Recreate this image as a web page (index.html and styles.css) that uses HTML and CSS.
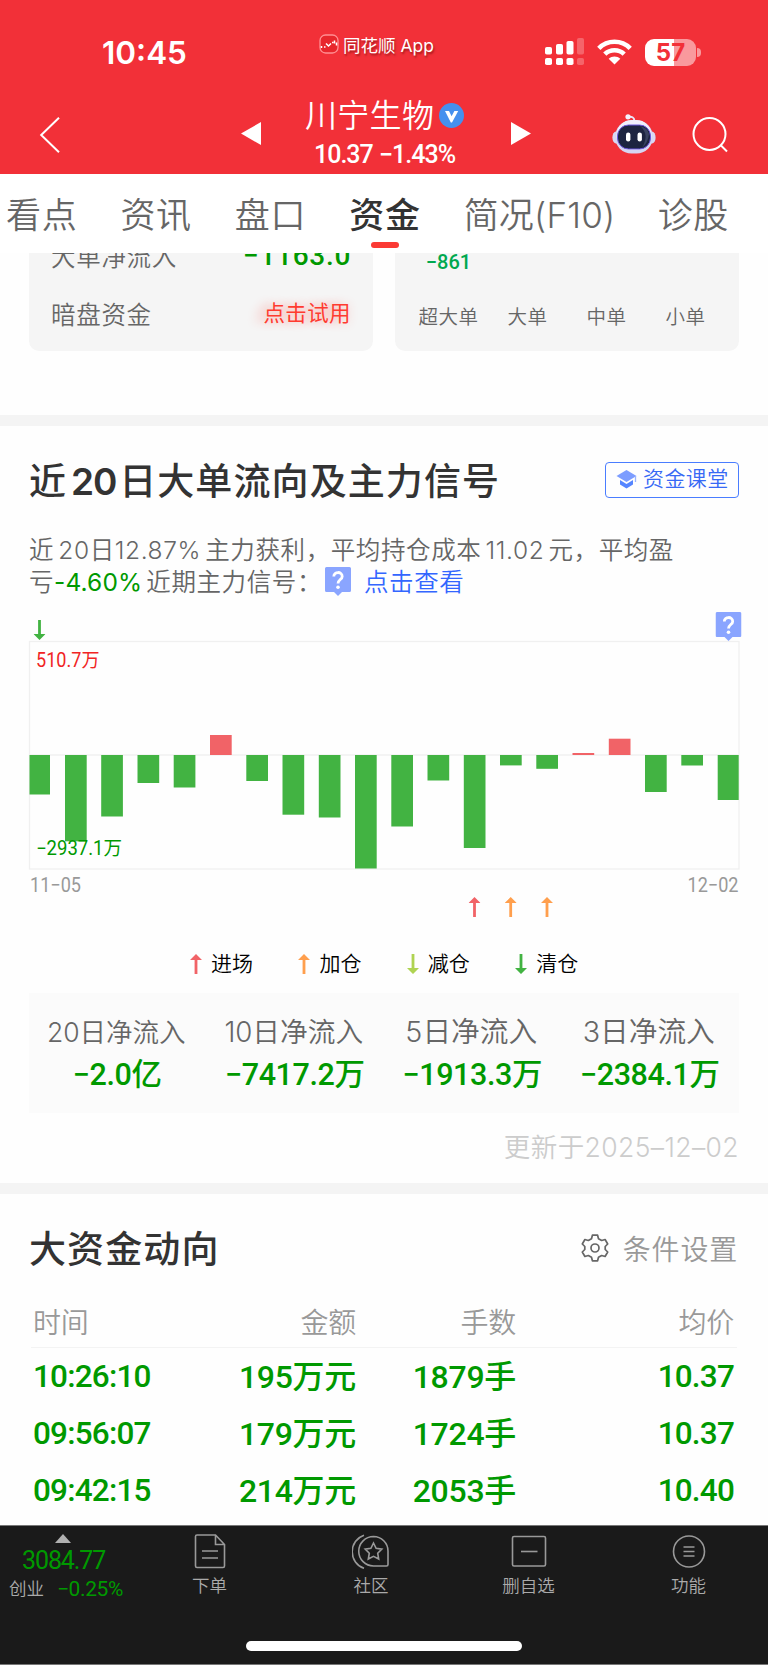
FILE: index.html
```html
<!DOCTYPE html>
<html lang="zh-CN">
<head>
    <meta charset="UTF-8">
    <meta name="viewport" content="width=device-width, initial-scale=1.0">
    <title>川宁生物 - 资金</title>
    <link rel="stylesheet" href="styles.css">
</head>
<body>
    <!-- Shared shapes -->
    <svg class="defs" width="0" height="0">
        <symbol id="arrow-up" viewBox="0 0 12 20">
            <path d="M6 0L12 6H7.4V20H4.6V6H0Z" fill="currentColor"/>
        </symbol>
        <symbol id="arrow-down" viewBox="0 0 12 20">
            <path d="M6 20L12 14H7.4V0H4.6V14H0Z" fill="currentColor"/>
        </symbol>
        <symbol id="help" viewBox="0 0 26 29">
            <path d="M1.5 0H24.5Q26 0 26 1.5V23.5Q26 25 24.5 25H17L13 29L9 25H1.5Q0 25 0 23.5V1.5Q0 0 1.5 0Z" fill="#8aa5ff"/>
            <path d="M8.8 9.6C8.8 4.2 17.2 4.2 17.2 9.4C17.2 12.6 13 12.6 13 16.6" fill="none" stroke="#fff" stroke-width="2.8"/>
            <circle cx="13" cy="20.3" r="1.8" fill="#fff"/>
        </symbol>
    </svg>

    <header class="header">
        <div class="status">
            <span class="clock">10:45</span>
            <span class="island">
                <svg width="20" height="20" viewBox="0 0 20 20">
                    <rect x="1" y="1" width="18" height="18" rx="5.5" fill="#e8262c" stroke="#ff8f92" stroke-width="1.3"/>
                    <path d="M2.5 12V14M5 13H6.5M7 9.5L9.5 12L12 9.5M13 8.5H14.5M15.5 6.5V9.5M17.5 8.5V11.5" fill="none" stroke="#fff" stroke-width="1.5"/>
                </svg>
                同花顺 App
            </span>
            <span class="signals">
                <svg width="40" height="28" viewBox="0 0 40 28" fill="#fff">
                    <rect x="0" y="9" width="7" height="7.5" rx="1.8"/>
                    <rect x="11" y="6" width="7" height="10.5" rx="1.8"/>
                    <rect x="21.5" y="3" width="7" height="13.5" rx="1.8"/>
                    <rect x="32" y="0" width="7" height="16.5" rx="1.8" opacity=".25"/>
                    <rect x="0" y="20" width="7" height="7" rx="1.8"/>
                    <rect x="11" y="20" width="7" height="7" rx="1.8"/>
                    <rect x="21.5" y="20" width="7" height="7" rx="1.8"/>
                    <rect x="32" y="20" width="7" height="7" rx="1.8" opacity=".25"/>
                </svg>
                <svg class="wifi" width="35" height="26" viewBox="0 0 35 26" fill="none" stroke="#fff" stroke-width="4.6">
                    <path d="M1.8 9.3C10.5 .6 24.5 .6 33.2 9.3"/>
                    <path d="M7.8 15.2C13.2 9.9 21.8 9.9 27.2 15.2"/>
                    <path d="M17.5 25.5L11.7 19.8C15 16.8 20 16.8 23.3 19.8Z" fill="#fff" stroke="none"/>
                </svg>
                <span class="battery">57</span>
                <span class="battery-tip"></span>
            </span>
        </div>
        <div class="nav">
            <svg class="back" width="22" height="36" viewBox="0 0 22 36" fill="none" stroke="#fff" stroke-width="2">
                <path d="M20 .8L2.2 18L20 35.2"/>
            </svg>
            <svg class="prev" width="20" height="23" viewBox="0 0 20 23"><path d="M20 0V23L0 11.5Z" fill="#fff"/></svg>
            <div class="stock">
                <div class="stock-name">
                    <span>川宁生物</span>
                    <svg width="25" height="25" viewBox="0 0 25 25">
                        <circle cx="12.5" cy="12.5" r="12.5" fill="#4590ee"/>
                        <path d="M6 8H10L12.6 13.2L15.4 8H19.2L13 19.5H11.8Z" fill="#fff"/>
                    </svg>
                </div>
                <div class="stock-price">10.37 −1.43%</div>
            </div>
            <svg class="next" width="20" height="23" viewBox="0 0 20 23"><path d="M0 0V23L20 11.5Z" fill="#fff"/></svg>
            <svg class="robot" width="44" height="40" viewBox="0 0 44 40">
                <path d="M15.5 3Q22 1.5 22.5 7" fill="none" stroke="#e9e6fa" stroke-width="2"/>
                <circle cx="16" cy="2.8" r="2.6" fill="#f4f2ff"/>
                <ellipse cx="4" cy="23.5" rx="3.6" ry="6" fill="#d9d8f4"/>
                <ellipse cx="40" cy="23.5" rx="3.6" ry="6" fill="#d9d8f4"/>
                <rect x="3" y="6.5" width="38" height="33" rx="16.5" fill="#d6d5f2"/>
                <rect x="4.5" y="6" width="35" height="30" rx="15" fill="#f1effc"/>
                <rect x="5.5" y="11" width="33" height="24" rx="11" fill="#1d2440" stroke="#6f58df" stroke-width="1"/>
                <path d="M28 12Q36 14 37 20Q36 29 30 34Q38 20 28 12Z" fill="#39425f"/>
                <rect x="14" y="18.5" width="4.4" height="9" rx="2.2" fill="#fff"/>
                <rect x="25.5" y="18.5" width="4.4" height="9" rx="2.2" fill="#fff"/>
            </svg>
            <svg class="search" width="36" height="36" viewBox="0 0 36 36" fill="none" stroke="#fff" stroke-width="2">
                <circle cx="17.5" cy="17" r="16"/>
                <path d="M28.5 28L35 34.5"/>
            </svg>
        </div>
    </header>

    <nav class="tabs">
        <span>看点</span>
        <span>资讯</span>
        <span>盘口</span>
        <span class="active">资金</span>
        <span class="profile">简况(F10)</span>
        <span>诊股</span>
    </nav>

    <!-- Cards scrolled half under the tab bar -->
    <section class="cards">
        <div class="card card-net">
            <div class="card-row"><span>大单净流入</span><b>−1163.0</b></div>
            <div class="card-row"><span>暗盘资金</span><em>点击试用</em></div>
        </div>
        <div class="card card-sizes">
            <div class="size-value">−861</div>
            <div class="size-names"><span>超大单</span><span>大单</span><span>中单</span><span>小单</span></div>
        </div>
    </section>

    <section class="flow">
        <div class="flow-head">
            <h2>近<i>20</i>日大单流向及主力信号</h2>
            <span class="lesson">
                <svg width="21" height="19" viewBox="0 0 21 19">
                    <path d="M10.5 0L20.5 6L10.5 12L.5 6Z" fill="#7d9dff"/>
                    <path d="M4 10L10.5 14L17 10V14.5L10.5 18.5L4 14.5Z" fill="#5585ff"/>
                    <path d="M19.5 6V12" stroke="#9db5ff" stroke-width="1.3"/>
                </svg>
                <span>资金课堂</span>
            </span>
        </div>
        <div class="summary">
            <p>近 20日12.87% 主力获利，平均持仓成本 11.02 元，平均盈</p>
            <p>亏<b>-4.60%</b> 近期主力信号：<svg width="26" height="29"><use href="#help"/></svg><a>点击查看</a></p>
        </div>

        <svg class="chart" width="768" height="320" viewBox="0 610 768 320">
            <g fill="none" stroke="#f0f0f0" stroke-width="1.3">
                <rect x="29.5" y="641.5" width="709.5" height="227.5"/>
                <path d="M29.5 755H739"/>
            </g>
            <g fill="#42b342">
                <rect x="29.5" y="755" width="20.5" height="39.5"/>
                <rect x="65" y="755" width="21.7" height="86.3"/>
                <rect x="101.2" y="755" width="21.7" height="61.5"/>
                <rect x="137.5" y="755" width="21.7" height="28"/>
                <rect x="173.7" y="755" width="21.7" height="32.5"/>
                <rect x="246.3" y="755" width="21.7" height="26"/>
                <rect x="282.5" y="755" width="21.7" height="59.7"/>
                <rect x="318.8" y="755" width="21.7" height="62.5"/>
                <rect x="355" y="755" width="21.7" height="113.5"/>
                <rect x="391.3" y="755" width="21.7" height="71.5"/>
                <rect x="427.5" y="755" width="21.7" height="25.5"/>
                <rect x="463.8" y="755" width="21.7" height="93"/>
                <rect x="500" y="755" width="21.7" height="10.4"/>
                <rect x="536.3" y="755" width="21.7" height="13.8"/>
                <rect x="645" y="755" width="21.7" height="37"/>
                <rect x="681.3" y="755" width="21.7" height="10.5"/>
                <rect x="717.7" y="755" width="21" height="45"/>
            </g>
            <g fill="#f16367">
                <rect x="210" y="735" width="21.7" height="20"/>
                <rect x="572.5" y="753" width="21.7" height="2"/>
                <rect x="608.8" y="738.7" width="21.7" height="16.3"/>
            </g>
            <use href="#arrow-down" x="33.5" y="620" width="12" height="20" color="#42b342"/>
            <use href="#arrow-up" x="468.5" y="897" width="12" height="20" color="#f16367"/>
            <use href="#arrow-up" x="504.7" y="897" width="12" height="20" color="#ff9f4d"/>
            <use href="#arrow-up" x="541" y="897" width="12" height="20" color="#ff9f4d"/>
            <use href="#help" x="715.5" y="612" width="26" height="29"/>
            <text class="max" x="36" y="667" textLength="63.5" lengthAdjust="spacingAndGlyphs">510.7万</text>
            <text class="min" x="36" y="854.5" textLength="86" lengthAdjust="spacingAndGlyphs">−2937.1万</text>
            <text class="date" x="30" y="892" textLength="51" lengthAdjust="spacingAndGlyphs">11−05</text>
            <text class="date" x="687.5" y="892" textLength="51" lengthAdjust="spacingAndGlyphs">12−02</text>
        </svg>
        <div class="legend">
            <span><svg width="12" height="20" color="#f16367"><use href="#arrow-up"/></svg>进场</span>
            <span><svg width="12" height="20" color="#ff9f4d"><use href="#arrow-up"/></svg>加仓</span>
            <span><svg width="12" height="20" color="#afd352"><use href="#arrow-down"/></svg>减仓</span>
            <span><svg width="12" height="20" color="#42b342"><use href="#arrow-down"/></svg>清仓</span>
        </div>

        <div class="totals">
            <div><span>20日净流入</span><b>−2.0亿</b></div>
            <div><span class="mid">10日净流入</span><b>−7417.2万</b></div>
            <div><span class="big">5日净流入</span><b>−1913.3万</b></div>
            <div><span class="big">3日净流入</span><b>−2384.1万</b></div>
        </div>
        <div class="updated">更新于2025–12–02</div>
    </section>

    <section class="trades">
        <div class="trades-head">
            <h2>大资金动向</h2>
            <span class="settings">
                <svg width="28" height="28" viewBox="0 0 28 28" fill="none" stroke="#666" stroke-width="1.7" stroke-linejoin="round">
                    <path d="M11.4 1.2H16.6L17.5 4.7L20.7 6.5L24.1 5.5L26.7 10L24.2 12.5V15.5L26.7 18L24.1 22.5L20.7 21.5L17.5 23.3L16.6 26.8H11.4L10.5 23.3L7.3 21.5L3.9 22.5L1.3 18L3.8 15.5V12.5L1.3 10L3.9 5.5L7.3 6.5L10.5 4.7Z"/>
                    <circle cx="14" cy="14" r="4"/>
                </svg>
                条件设置
            </span>
        </div>
        <div class="row row-head"><span>时间</span><span>金额</span><span>手数</span><span>均价</span></div>
        <div class="row"><span class="num">10:26:10</span><span>195万元</span><span>1879手</span><span class="num">10.37</span></div>
        <div class="row"><span class="num">09:56:07</span><span>179万元</span><span>1724手</span><span class="num">10.37</span></div>
        <div class="row"><span class="num">09:42:15</span><span>214万元</span><span>2053手</span><span class="num">10.40</span></div>
    </section>

    <footer class="footer">
        <div class="footer-items">
            <div class="index">
                <svg width="16" height="9" viewBox="0 0 16 9"><path d="M8 0L16 9H0Z" fill="#b0b0b0"/></svg>
                <div class="index-value">3084.77</div>
                <div class="index-change"><span>创业</span><b>−0.25%</b></div>
            </div>
            <div class="item order">
                <svg width="34" height="36" viewBox="0 0 34 36">
                    <path d="M4 2H22.5L31.5 11.5V33Q31.5 34.5 30 34.5H4Q2.5 34.5 2.5 33V3.5Q2.5 2 4 2ZM22.5 2V11.5H31.5M9 18H25M9 25H25"/>
                </svg>
                下单
            </div>
            <div class="item community">
                <svg width="38" height="36" viewBox="0 0 38 36">
                    <path d="M12 2.2A17.5 17.5 0 0 0 12 35.3M21.5 3.5A14.6 14.6 0 1 0 21.5 33H34.5Q36 33 36 31.5V18A14.6 14.6 0 0 0 21.5 3.5Z"/>
                    <path d="M21.5 10L24.1 15.3L29.8 16.1L25.7 20.2L26.7 26L21.5 23.3L16.3 26L17.3 20.2L13.2 16.1L18.9 15.3Z"/>
                </svg>
                社区
            </div>
            <div class="item remove">
                <svg width="36" height="36" viewBox="0 0 36 36">
                    <rect x="1.5" y="3.5" width="33" height="29.5" rx="1.5"/>
                    <path d="M10 18.5H26.5"/>
                </svg>
                删自选
            </div>
            <div class="item more">
                <svg width="36" height="36" viewBox="0 0 36 36">
                    <circle cx="18" cy="18.5" r="15.5"/>
                    <path d="M12.5 14H23.5M12.5 18.5H23.5M12.5 23H23.5"/>
                </svg>
                功能
            </div>
        </div>
        <div class="home-bar"></div>
    </footer>
</body>
</html>
```
FILE: styles.css
```css
* {
    box-sizing: border-box;
}

body {
    margin: 0;
    width: 768px;
    height: 1665px;
    overflow: hidden;
    background: #fefefe;
    color: #666;
    font-family: Inter, "Noto Sans CJK SC", sans-serif;
    font-weight: 350;
}

svg {
    flex: none;
    display: block;
}

.defs {
    position: absolute;
}

h2, p {
    margin: 0;
}

b, em, i {
    font-style: normal;
}

/* Header */
.header {
    height: 174px;
    background: #f23038;
    color: #fff;
}

.status {
    height: 84px;
    display: flex;
}

.clock {
    width: 216px;
    padding: 33px 0 0 102px;
    font-size: 31.5px;
    line-height: 40px;
    font-weight: 600;
}

.island {
    width: 328px;
    height: 28px;
    margin-top: 30px;
    padding-left: 103px;
    display: flex;
    align-items: center;
    gap: 4px;
    font-size: 17.5px;
    font-weight: 400;
    white-space: nowrap;
    text-shadow: 1px 2px 2px rgba(90, 0, 0, 0.5);
}

.signals {
    display: flex;
    align-items: center;
    height: 28px;
    margin-top: 38px;
    padding-left: 1px;
}

.wifi {
    margin-left: 12px;
}

.battery {
    width: 51px;
    height: 27px;
    margin-left: 13px;
    border-radius: 9px;
    background: linear-gradient(90deg, #fff 57%, #f9999d 57%);
    color: #f23038;
    font-size: 24px;
    line-height: 27px;
    font-weight: 700;
    text-align: center;
}

.battery-tip {
    width: 4px;
    height: 9px;
    margin-left: 1px;
    border-radius: 0 5px 5px 0;
    background: #f9999d;
}

.nav {
    height: 90px;
    display: flex;
    align-items: flex-start;
}

.back {
    margin: 33px 0 0 39px;
}

.prev {
    margin: 38px 0 0 180px;
}

.stock {
    width: 250px;
    padding: 10px 0 0 44px;
}

.stock-name {
    display: flex;
    align-items: center;
    gap: 5px;
    height: 43px;
    font-size: 32px;
    line-height: 40px;
    letter-spacing: 0.3px;
}

.stock-name span {
    height: 40px;
}

.stock-price {
    padding-left: 9px;
    font: 500 25px/36px Roboto, sans-serif;
    letter-spacing: -1px;
    word-spacing: 1px;
    white-space: nowrap;
}

.next {
    margin-top: 38px;
}

.robot {
    margin: 30px 0 0 81px;
}

.search {
    margin: 33px 0 0 36px;
}

/* Tabs */
.tabs {
    height: 79px;
    padding: 15px 0 0 6px;
    display: flex;
    gap: 43px;
    font-size: 35px;
    line-height: 52px;
    letter-spacing: 0.7px;
    white-space: nowrap;
    background: #fff;
}

.tabs .active {
    display: flex;
    flex-direction: column;
    align-items: center;
    font-weight: 500;
    color: #333;
}

.tabs .active::after {
    content: "";
    width: 28px;
    height: 6px;
    margin-top: 1px;
    border-radius: 3px;
    background: #fb3a34;
}

.tabs .profile {
    width: 151px;
    letter-spacing: 0.2px;
}

/* Cards */
.cards {
    height: 162px;
    padding: 0 29px;
    display: flex;
    justify-content: space-between;
    align-items: flex-start;
}

.card {
    width: 344px;
    height: 98px;
    display: flex;
    flex-direction: column;
    justify-content: flex-end;
    overflow: hidden;
    background: #f5f5f5;
    border-radius: 0 0 10px 10px;
}

.card-net {
    padding: 0 22px 9px;
}

.card-row {
    flex: none;
    height: 58px;
    display: flex;
    justify-content: space-between;
    align-items: center;
    font-size: 24.5px;
    letter-spacing: 0.7px;
}

.card-row b {
    font: 500 28px Roboto, sans-serif;
    letter-spacing: 0.7px;
    color: #090;
}

.card-row em {
    font-size: 21.5px;
    line-height: 32px;
    height: 32px;
    letter-spacing: 0.4px;
    font-weight: 400;
    color: #ff3b30;
    text-shadow: -10px 0 8px rgba(255, 59, 48, 0.25), 0 0 10px rgba(255, 59, 48, 0.25);
}

.card-sizes {
    padding: 0 14px 16px;
}

.size-value {
    width: 79px;
    height: 20px;
    margin-bottom: 27px;
    font: 500 20px/20px Roboto, sans-serif;
    text-align: center;
    color: #00a84f;
}

.size-names {
    display: grid;
    grid-template-columns: repeat(4, 1fr);
    height: 36px;
    line-height: 36px;
    font-size: 19.5px;
    letter-spacing: 0.5px;
    text-align: center;
}

/* Flow of the last 20 days */
.flow {
    border-top: 11px solid #f4f4f4;
    height: 768px;
}

.flow-head {
    height: 107px;
    padding: 0 29px;
    display: flex;
    justify-content: space-between;
    align-items: center;
}

h2 {
    padding-top: 4px;
    font-size: 37px;
    line-height: 50px;
    font-weight: 500;
    letter-spacing: 1.1px;
    color: #333;
}

h2 i {
    font-size: 37px;
    font-weight: 600;
    letter-spacing: -1.2px;
    padding: 0 3px 0 4px;
}

.lesson {
    width: 134px;
    height: 36px;
    display: flex;
    align-items: center;
    gap: 6px;
    padding-left: 10px;
    border: 1.3px solid #4a7dff;
    border-radius: 4px;
    color: #3769f5;
    font-size: 21px;
    line-height: 32px;
    letter-spacing: 0.4px;
    white-space: nowrap;
}

.lesson span {
    height: 33px;
}

.summary {
    height: 77px;
    padding: 1px 0 0 29px;
    font-size: 24.5px;
    letter-spacing: 0.6px;
    word-spacing: -3.3px;
    white-space: nowrap;
}

.summary p {
    height: 32px;
    line-height: 32px;
    display: flex;
    white-space: pre;
}

.summary b {
    font-weight: 400;
    letter-spacing: 0.1px;
    color: #090;
}

.summary svg {
    margin: 1px 13px 0 3px;
}

.summary a {
    color: #3366ff;
}

.chart {
    font-family: Roboto, "Noto Sans CJK SC", sans-serif;
    font-size: 20px;
    font-weight: 500;
}

.chart .max {
    font-size: 19.5px;
    font-weight: 400;
    fill: #f12424;
}

.chart .min {
    font-size: 19.5px;
    font-weight: 400;
    fill: #090;
}

.chart .date {
    font-weight: 400;
    fill: #999;
}

.legend {
    height: 63px;
    padding: 17px 0 0 190px;
    display: flex;
    color: #000;
    font-size: 21px;
    line-height: 34px;
}

.legend span {
    width: 108.4px;
    display: flex;
    align-items: center;
    gap: 9px;
    height: 34px;
}

.totals {
    height: 120px;
    margin: 0 29px;
    padding-top: 18px;
    display: grid;
    grid-template-columns: repeat(4, 1fr);
    background: #fbfbfb;
    text-align: center;
    white-space: nowrap;
}

.totals span {
    display: block;
    height: 42px;
    margin-left: -3px;
    font-size: 26.5px;
    line-height: 42px;
}

.totals .mid {
    font-size: 27.7px;
}

.totals .big {
    font-size: 28.7px;
}

.totals b {
    display: block;
    height: 42px;
    margin-left: -1px;
    font: 500 30.5px/43px Roboto, "Noto Sans CJK SC", sans-serif;
    letter-spacing: -0.4px;
    color: #090;
}

.updated {
    height: 67px;
    padding-right: 29px;
    text-align: right;
    font-size: 26.5px;
    line-height: 68px;
    letter-spacing: 0.4px;
    color: #ccc;
}

/* Large trades */
.trades {
    height: 342px;
    border-top: 11px solid #f4f4f4;
}

.trades-head {
    height: 106px;
    padding: 2px 30px 0 29px;
    display: flex;
    align-items: center;
    justify-content: space-between;
}

.settings {
    display: flex;
    align-items: center;
    gap: 14px;
    color: #999;
    font-size: 28px;
    letter-spacing: 0.8px;
}

.row {
    height: 57px;
    padding: 0 34px 0 33px;
    display: grid;
    grid-template-columns: 161px 162px 160px 218px;
    align-items: center;
    text-align: right;
    font: 500 32px/40px Roboto, "Noto Sans CJK SC", sans-serif;
    letter-spacing: -0.3px;
    color: #090;
}

.row .num {
    font-size: 31.5px;
    letter-spacing: -0.8px;
}

.row span:first-child {
    text-align: left;
}

.row-head {
    height: 48px;
    border-bottom: 1px solid #f3f3f3;
    margin: 0 31px;
    padding: 0 2px;
    font-size: 28px;
    font-weight: 350;
    color: #999;
}

/* Footer */
.footer {
    height: 140px;
    background: #1a1a1a;
    border-top: 1px solid #777;
    border-bottom: 1px solid #777;
    color: #aaa;
}

.footer-items {
    height: 115px;
    display: flex;
}

.index {
    width: 148px;
    padding-top: 8px;
}

.index > svg {
    margin-left: 55px;
}

.index-value {
    height: 35px;
    padding-left: 22px;
    font: 400 25px/36px Roboto, sans-serif;
    letter-spacing: -1.1px;
    color: #090;
}

.index-change {
    display: flex;
    gap: 13px;
    padding-left: 9px;
    font-size: 17.5px;
    line-height: 22px;
}

.index-change b {
    font: 400 21px/22px Roboto, sans-serif;
    letter-spacing: -0.4px;
    color: #090;
}

.item {
    flex: none;
    width: 123px;
    padding-top: 7px;
    display: flex;
    flex-direction: column;
    align-items: center;
    font-size: 17.5px;
    line-height: 34px;
}

.item svg {
    fill: none;
    stroke: #999;
    stroke-width: 1.6;
}

.community {
    width: 200px;
}

.remove {
    width: 115px;
}

.more {
    width: 182px;
    padding-left: 23px;
}

.home-bar {
    width: 276px;
    height: 10px;
    margin-left: 246px;
    border-radius: 5px;
    background: #fff;
}
```
